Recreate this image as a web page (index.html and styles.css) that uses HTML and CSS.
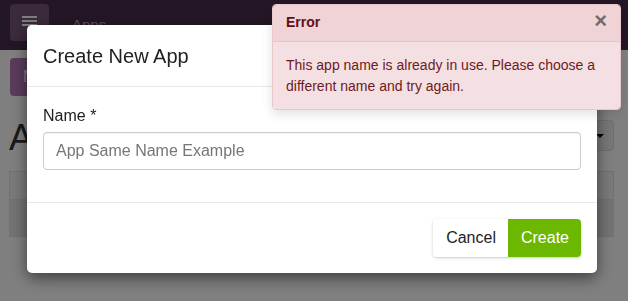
FILE: index.html
```html
<!DOCTYPE html>
<html lang="en">
<head>
<meta charset="utf-8">
<title>Apps</title>
<link rel="stylesheet" href="styles.css">
</head>
<body>
  <div class="page">
    <header class="navbar">
      <button class="menu-btn" aria-label="Menu">
        <span class="bar"></span><span class="bar"></span><span class="bar"></span>
      </button>
      <span class="brand">Apps</span>
    </header>
    <main class="content">
      <div class="toolbar">
        <button class="new-btn">New App</button>
      </div>
      <div class="title-row">
        <h1 class="page-title">Apps</h1>
        <button class="dd-btn">Sort by name <span class="caret"></span></button>
      </div>
      <table class="apps-table">
        <thead><tr><th>&nbsp;</th></tr></thead>
        <tbody><tr><td>&nbsp;</td></tr></tbody>
      </table>
    </main>
  </div>

  <div class="backdrop"></div>

  <div class="modal">
    <div class="modal-header">
      <h2 class="modal-title">Create New App</h2>
    </div>
    <div class="modal-body">
      <div class="form-group">
        <label class="form-label" for="app-name">Name *</label>
        <input class="form-input" id="app-name" type="text" placeholder="App Same Name Example">
      </div>
    </div>
    <div class="modal-footer">
      <div class="btn-group">
        <button class="btn btn-cancel">Cancel</button>
        <button class="btn btn-create">Create</button>
      </div>
    </div>
  </div>

  <div class="toast">
    <div class="toast-header">
      <strong class="toast-title">Error</strong>
      <span class="toast-close">&times;</span>
    </div>
    <div class="toast-body">This app name is already in use. Please choose a different name and try again.</div>
  </div>
</body>
</html>
```
FILE: styles.css
```css
* { box-sizing: border-box; }

html, body {
  margin: 0;
  padding: 0;
  height: 100%;
}

body {
  font-family: "Liberation Sans", Arial, sans-serif;
  color: #222;
  background: #ffffff;
  overflow: hidden;
}

/* ---------- background page ---------- */
.navbar {
  height: 50px;
  background: #472e4a;
  display: flex;
  align-items: flex-start;
  padding: 4px 10px 0;
}

.menu-btn {
  width: 39px;
  height: 37px;
  border: none;
  border-radius: 4px;
  background: #775379;
  display: flex;
  flex-direction: column;
  align-items: center;
  justify-content: flex-start;
  gap: 2px;
  padding: 12px 0 0;
}

.menu-btn .bar {
  display: block;
  width: 15px;
  height: 2px;
  background: #ffffff;
}

.brand {
  margin-left: 23px;
  margin-top: 11px;
  font-size: 15px;
  line-height: 20px;
  color: #b89cba;
}

.content {
  padding: 0 14px 0 9px;
}

.toolbar {
  padding-top: 8px;
  padding-left: 1px;
}

.new-btn {
  height: 38px;
  border: none;
  border-radius: 4px;
  background: #b676b8;
  color: #ffffff;
  font-family: inherit;
  font-size: 16px;
  padding: 0 13px;
}

.title-row {
  display: flex;
  justify-content: space-between;
  align-items: flex-start;
  margin-top: 22px;
}

.page-title {
  margin: 0;
  font-size: 36px;
  line-height: 40px;
  font-weight: 400;
  color: #333;
}

.dd-btn {
  margin-top: 2px;
  height: 31px;
  padding: 0 9px 0 12px;
  border: 1px solid #dcdcdc;
  border-radius: 4px;
  background: #efefef;
  font-family: inherit;
  font-size: 14px;
  color: #333;
  display: flex;
  align-items: center;
  gap: 6px;
}

.caret {
  display: inline-block;
  width: 0;
  height: 0;
  border-top: 4px solid #000;
  border-left: 4px solid transparent;
  border-right: 4px solid transparent;
}

.apps-table {
  width: 100%;
  margin-top: 13px;
  border-collapse: collapse;
  border: 1px solid #e2e2e2;
}

.apps-table th {
  height: 28px;
  background: #f5f5f5;
  border-bottom: 1px solid #e2e2e2;
}

.apps-table td {
  height: 37px;
  background: #e6e6e6;
}

/* ---------- backdrop ---------- */
.backdrop {
  position: fixed;
  inset: 0;
  background: rgba(0, 0, 0, 0.5);
}

/* ---------- modal ---------- */
.modal {
  position: fixed;
  top: 25px;
  left: 27px;
  width: 570px;
  background: #ffffff;
  border-radius: 5px;
  box-shadow: 0 5px 15px rgba(0, 0, 0, 0.5);
}

.modal-header {
  padding: 19px 16px 18px;
  border-bottom: 1px solid #e8e8e8;
}

.modal-title {
  margin: 0;
  font-size: 20px;
  line-height: 24px;
  font-weight: 400;
  color: #222;
}

.modal-body {
  padding: 17px 16px 16px;
}

.form-group {
  margin-bottom: 16px;
}

.form-label {
  display: block;
  font-size: 16px;
  line-height: 24px;
  margin-bottom: 4px;
  color: #222;
}

.form-input {
  display: block;
  width: 100%;
  height: 38px;
  padding: 6px 12px;
  border: 1px solid #cccccc;
  border-radius: 4px;
  font-family: inherit;
  font-size: 16px;
  color: #222;
  box-shadow: inset 0 1px 1px rgba(0, 0, 0, 0.05);
}

.form-input::placeholder {
  color: #767676;
}

.modal-footer {
  border-top: 1px solid #e8e8e8;
  padding: 16px;
  display: flex;
  justify-content: flex-end;
}

.btn-group {
  display: flex;
  border-radius: 4px;
  box-shadow: 0 1px 3px rgba(0, 0, 0, 0.22);
}

.btn {
  height: 38px;
  padding: 0 12px 0 13px;
  border: none;
  font-family: inherit;
  font-size: 16px;
}

.btn-cancel {
  background: #ffffff;
  color: #222;
  border-radius: 4px 0 0 4px;
}

.btn-create {
  background: #6cb700;
  color: #ffffff;
  border-radius: 0 4px 4px 0;
}

/* ---------- toast ---------- */
.toast {
  position: fixed;
  top: 4px;
  left: 272px;
  width: 349px;
  border: 1px solid #e9c6ca;
  border-radius: 4px;
  overflow: hidden;
  box-shadow: 0 4px 12px rgba(0, 0, 0, 0.12);
  color: #6e1a22;
}

.toast-header {
  height: 37px;
  display: flex;
  align-items: center;
  justify-content: space-between;
  padding: 0 13px 2px 13px;
  background: #efd3d7;
  border-bottom: 1px solid #e6c4c8;
}

.toast-title {
  font-size: 14px;
  font-weight: 700;
  color: #5f0f18;
}

.toast-close {
  font-size: 22px;
  font-weight: 700;
  line-height: 1;
  color: #000;
  opacity: 0.5;
  margin-top: -2px;
}

.toast-body {
  background: #f4e0e2;
  padding: 13px 13px 12px;
  font-size: 14px;
  line-height: 21px;
}
```
